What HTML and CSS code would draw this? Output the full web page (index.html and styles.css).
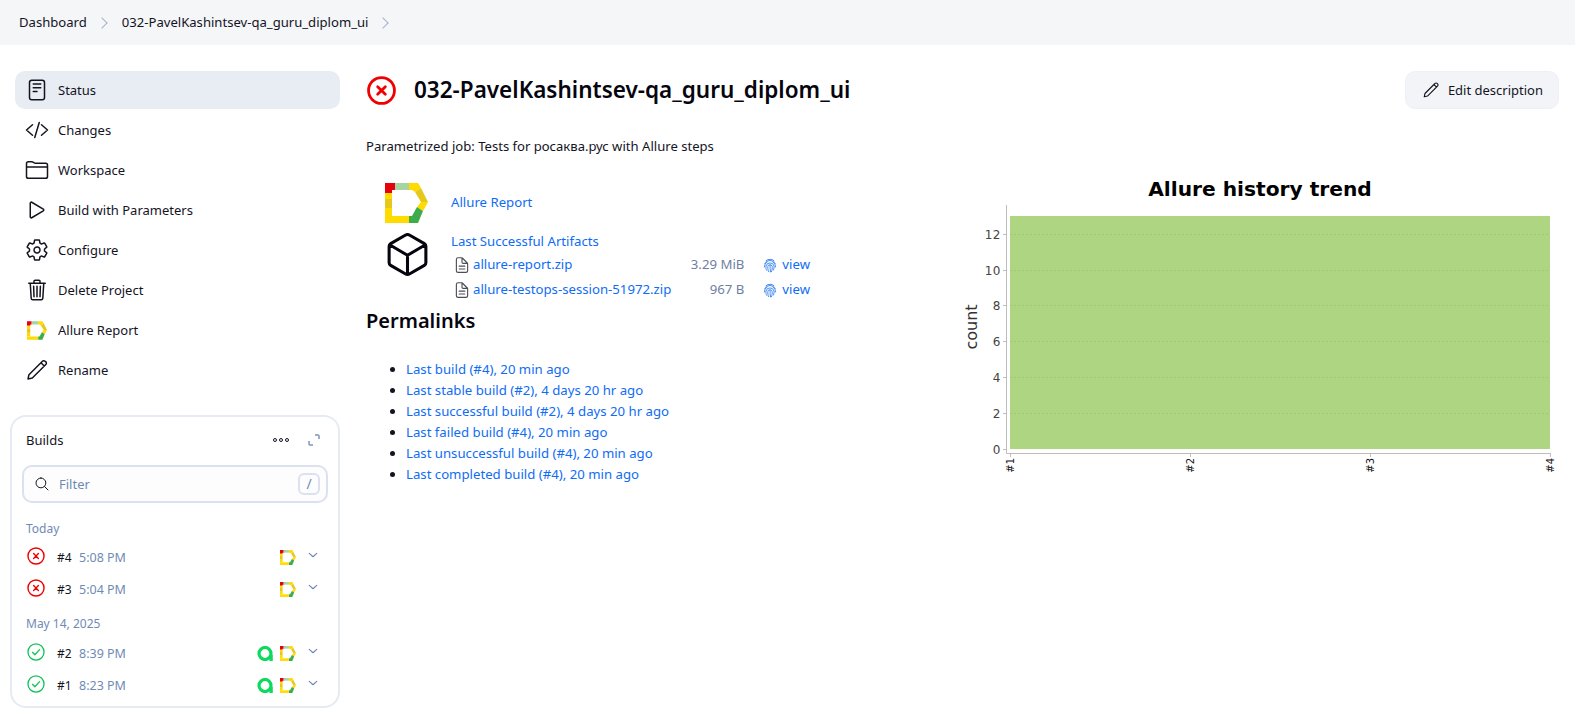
FILE: index.html
```html
<!DOCTYPE html>
<html lang="en">
<head>
  <meta charset="UTF-8">
  <title>032-PavelKashintsev-qa_guru_diplom_ui</title>
  <link rel="stylesheet" href="styles.css">
</head>
<body>

  <!-- Shared icons -->
  <svg class="icon-defs" xmlns="http://www.w3.org/2000/svg">
    <symbol id="i-doc" viewBox="0 0 512 512"><rect x="96" y="48" width="320" height="416" rx="48" class="ln"/><path d="M176 128h160M176 208h160M176 288h80" class="ln"/></symbol>
    <symbol id="i-code" viewBox="0 0 512 512"><path d="M160 368L32 256l128-112M352 368l128-112-128-112M304 96l-96 320" class="ln"/></symbol>
    <symbol id="i-folder" viewBox="0 0 512 512"><path d="M440 432H72a40 40 0 01-40-40V120a40 40 0 0140-40h75.89a40 40 0 0122.19 6.72l27.84 18.56a40 40 0 0022.19 6.72H440a40 40 0 0140 40v240a40 40 0 01-40 40zM32 192h448" class="ln"/></symbol>
    <symbol id="i-play" viewBox="0 0 512 512"><path d="M112 111v290c0 17.44 17 28.52 31 20.16l247.9-148.37c12.12-7.25 12.12-26.33 0-33.58L143 90.84c-14-8.36-31 2.72-31 20.16z" class="ln"/></symbol>
    <symbol id="i-gear" viewBox="0 0 512 512"><path d="M262.29 192.31a64 64 0 1057.4 57.4 64.13 64.13 0 00-57.4-57.4zM416.39 256a154.34 154.34 0 01-1.53 20.79l45.21 35.46a10.81 10.81 0 012.45 13.75l-42.77 74a10.81 10.81 0 01-13.14 4.59l-44.9-18.08a16.11 16.11 0 00-15.17 1.75A164.48 164.48 0 01325 400.8a15.94 15.94 0 00-8.82 12.14l-6.73 47.89a11.08 11.08 0 01-10.68 9.17h-85.54a11.11 11.11 0 01-10.69-8.87l-6.72-47.82a16.07 16.07 0 00-9-12.22 155.3 155.3 0 01-21.46-12.57 16 16 0 00-15.11-1.71l-44.89 18.07a10.81 10.81 0 01-13.14-4.58l-42.77-74a10.8 10.8 0 012.45-13.75l38.21-30a16.05 16.05 0 006-14.08c-.36-4.17-.58-8.33-.58-12.5s.21-8.27.58-12.35a16 16 0 00-6.07-13.94l-38.19-30A10.81 10.81 0 0149.48 186l42.77-74a10.81 10.81 0 0113.14-4.59l44.9 18.08a16.11 16.11 0 0015.17-1.75A164.48 164.48 0 01187 111.2a15.94 15.94 0 008.82-12.14l6.73-47.89A11.08 11.08 0 01213.23 42h85.54a11.11 11.11 0 0110.69 8.87l6.72 47.82a16.07 16.07 0 009 12.22 155.3 155.3 0 0121.46 12.57 16 16 0 0015.11 1.71l44.89-18.07a10.81 10.81 0 0113.14 4.58l42.77 74a10.8 10.8 0 01-2.45 13.75l-38.21 30a16.05 16.05 0 00-6.05 14.08c.33 4.14.55 8.3.55 12.47z" class="ln"/></symbol>
    <symbol id="i-trash" viewBox="0 0 512 512"><path d="M112 112l20 320c.95 18.49 14.4 32 32 32h184c17.68 0 30.87-13.51 32-32l20-320M80 112h352M192 112V72a23.93 23.93 0 0124-24h80a23.93 23.93 0 0124 24v40M256 176v224M184 176l8 224M328 176l-8 224" class="ln"/></symbol>
    <symbol id="i-pencil" viewBox="0 0 512 512"><path d="M340 100L84 356 64 448l92-20 256-256zM372 68a40 40 0 0157 0l15 15a40 40 0 010 57l-32 32-72-72z" class="ln"/></symbol>
    <symbol id="i-search" viewBox="0 0 512 512"><path d="M221.09 64a157.09 157.09 0 10157.09 157.09A157.1 157.1 0 00221.09 64zM338.29 338.29L448 448" class="ln"/></symbol>
    <symbol id="i-cube" viewBox="0 0 512 512"><path d="M448 341.37V170.61A32 32 0 00432.11 143l-152-88.46a47.94 47.94 0 00-48.24 0L79.89 143A32 32 0 0064 170.61v170.76A32 32 0 0079.89 369l152 88.46a48 48 0 0048.24 0l152-88.46A32 32 0 00448 341.37zM69 154l187 110 187-110M256 464V264" class="ln"/></symbol>
    <symbol id="i-file" viewBox="0 0 512 512"><path d="M416 221.25V416a48 48 0 01-48 48H144a48 48 0 01-48-48V96a48 48 0 0148-48h98.75a32 32 0 0122.62 9.37l141.26 141.26a32 32 0 019.37 22.62zM256 56v120a32 32 0 0032 32h120M176 288h160M176 368h160" class="ln"/></symbol>
    <symbol id="i-print" viewBox="0 0 24 24">
      <path d="M6 5.500a9 9 0 0 1 12 0M4 10a9 9 0 0 1 16 0M3.500 15a9 9 0 0 1 4-7.500M20.500 15a9 9 0 0 0-4-7.500M7 20c-1-2-1.500-4-1-6.500a6.200 6.200 0 0 1 12 0c.3 2 0 4-.7 6M10 22c-1-2-1.600-5-1.200-8a3.300 3.300 0 0 1 6.400 0c.4 3 0 5.500-1 8M12 12.500c0 3 .3 6.500 .8 10" class="fp"/>
    </symbol>
    <symbol id="i-fail" viewBox="0 0 28 28"><circle cx="14" cy="14" r="12.500" class="st-fail"/><path d="M10.300 10.300l7.400 7.400M17.700 10.300l-7.400 7.400" class="st-fail"/></symbol>
    <symbol id="i-ok" viewBox="0 0 28 28"><circle cx="14" cy="14" r="12.500" fill="none" stroke="#0fc45a" stroke-width="2"/><path d="M8.500 14.500l3.800 3.800 7.200-8" fill="none" stroke="#0fc45a" stroke-width="2" stroke-linecap="round" stroke-linejoin="round"/></symbol>
    <symbol id="i-allure" viewBox="0 0 43 40">
      <path d="M0 0h10v7H7v3H0z" fill="#e8000d"/>
      <path d="M10 0h14v7H10z" fill="#a7d5a2"/>
      <path d="M24 0h9l3 5-6 4-3-2h-3z" fill="#ffdb00"/>
      <path d="M36 5l7 14h-7l-6-10z" fill="#e6c81c"/>
      <path d="M36 19h7l-5 9-6-4z" fill="#ffdb00"/>
      <path d="M32 24l6 4-5 12h-9v-7h3z" fill="#3fab4a"/>
      <path d="M0 33h24v7H0z" fill="#ffdb00"/>
      <path d="M0 10h7v6H0zM0 25h7v8H0z" fill="#ffdb00"/>
      <path d="M0 16h7v9H0z" fill="#e6c81c"/>
    </symbol>
    <symbol id="i-testops" viewBox="0 0 16 15"><circle cx="8" cy="7.500" r="6" fill="none" stroke="#0bdb5c" stroke-width="3.200"/><path d="M12.500 9h3.300v6h-3.300z" fill="#0bdb5c"/></symbol>
    <symbol id="i-chev" viewBox="0 0 12 8"><path d="M1.500 1.500L6 5.500l4.500-4" fill="none" stroke="#6d87b3" stroke-width="1.400" stroke-linecap="round" stroke-linejoin="round"/></symbol>
  </svg>

  <nav class="breadcrumbs">
    <a href="#">Dashboard</a>
    <span class="crumb-sep"></span>
    <a href="#">032-PavelKashintsev-qa_guru_diplom_ui</a>
    <span class="crumb-sep"></span>
  </nav>

  <div class="page">
    <aside class="sidebar">
      <ul class="tasks">
        <li class="task active"><svg class="task-icon"><use href="#i-doc"/></svg>Status</li>
        <li class="task"><svg class="task-icon"><use href="#i-code"/></svg>Changes</li>
        <li class="task"><svg class="task-icon"><use href="#i-folder"/></svg>Workspace</li>
        <li class="task"><svg class="task-icon"><use href="#i-play"/></svg>Build with Parameters</li>
        <li class="task"><svg class="task-icon"><use href="#i-gear"/></svg>Configure</li>
        <li class="task"><svg class="task-icon"><use href="#i-trash"/></svg>Delete Project</li>
        <li class="task"><svg class="task-logo"><use href="#i-allure"/></svg>Allure Report</li>
        <li class="task"><svg class="task-icon"><use href="#i-pencil"/></svg>Rename</li>
      </ul>

      <section class="builds">
        <div class="builds-head">
          <span>Builds</span>
          <span class="dots"><i></i><i></i><i></i></span>
          <svg class="expand" viewBox="0 0 12 12"><path d="M7 1h3a1 1 0 0 1 1 1v3M5 11H2a1 1 0 0 1-1-1V7"/></svg>
        </div>
        <div class="filter">
          <svg class="filter-icon"><use href="#i-search"/></svg>
          <span class="filter-text">Filter</span>
          <kbd class="filter-key">/</kbd>
        </div>

        <div class="build-date first">Today</div>
        <div class="build-row">
          <svg class="build-status"><use href="#i-fail"/></svg>
          <span class="build-num">#4</span><span class="build-time">5:08 PM</span>
          <span class="build-links"><svg class="mini"><use href="#i-allure"/></svg></span>
          <svg class="chev"><use href="#i-chev"/></svg>
        </div>
        <div class="build-row">
          <svg class="build-status"><use href="#i-fail"/></svg>
          <span class="build-num">#3</span><span class="build-time">5:04 PM</span>
          <span class="build-links"><svg class="mini"><use href="#i-allure"/></svg></span>
          <svg class="chev"><use href="#i-chev"/></svg>
        </div>

        <div class="build-date">May 14, 2025</div>
        <div class="build-row">
          <svg class="build-status"><use href="#i-ok"/></svg>
          <span class="build-num">#2</span><span class="build-time">8:39 PM</span>
          <span class="build-links"><svg class="mini"><use href="#i-testops"/></svg><svg class="mini"><use href="#i-allure"/></svg></span>
          <svg class="chev"><use href="#i-chev"/></svg>
        </div>
        <div class="build-row">
          <svg class="build-status"><use href="#i-ok"/></svg>
          <span class="build-num">#1</span><span class="build-time">8:23 PM</span>
          <span class="build-links"><svg class="mini"><use href="#i-testops"/></svg><svg class="mini"><use href="#i-allure"/></svg></span>
          <svg class="chev"><use href="#i-chev"/></svg>
        </div>
      </section>
    </aside>

    <main class="main">
      <header class="job-head">
        <svg class="job-status"><use href="#i-fail"/></svg>
        <h1>032-PavelKashintsev-qa_guru_diplom_ui</h1>
        <button class="edit-btn" type="button"><svg class="edit-icon"><use href="#i-pencil"/></svg>Edit description</button>
      </header>

      <p class="job-desc">Parametrized job: Tests for росаква.рус with Allure steps</p>

      <div class="job-body">
        <div class="job-left">
          <div class="action">
            <svg class="action-allure"><use href="#i-allure"/></svg>
            <a href="#">Allure Report</a>
          </div>

          <div class="artifacts">
            <svg class="action-cube"><use href="#i-cube"/></svg>
            <div class="artifact-list">
              <a href="#" class="artifact-title">Last Successful Artifacts</a>
              <div class="artifact">
                <svg class="file-icon"><use href="#i-file"/></svg>
                <a href="#" class="artifact-name">allure-report.zip</a>
                <span class="artifact-size">3.29 MiB</span>
                <svg class="print-icon"><use href="#i-print"/></svg>
                <a href="#">view</a>
              </div>
              <div class="artifact">
                <svg class="file-icon"><use href="#i-file"/></svg>
                <a href="#" class="artifact-name">allure-testops-session-51972.zip</a>
                <span class="artifact-size">967 B</span>
                <svg class="print-icon"><use href="#i-print"/></svg>
                <a href="#">view</a>
              </div>
            </div>
          </div>

          <h2>Permalinks</h2>
          <ul class="permalinks">
            <li><a href="#">Last build (#4), 20 min ago</a></li>
            <li><a href="#">Last stable build (#2), 4 days 20 hr ago</a></li>
            <li><a href="#">Last successful build (#2), 4 days 20 hr ago</a></li>
            <li><a href="#">Last failed build (#4), 20 min ago</a></li>
            <li><a href="#">Last unsuccessful build (#4), 20 min ago</a></li>
            <li><a href="#">Last completed build (#4), 20 min ago</a></li>
          </ul>
        </div>

        <svg class="trend" viewBox="0 0 600 320" width="600" height="320">
          <text class="trend-title" x="301" y="26" text-anchor="middle">Allure history trend</text>
          <rect class="trend-area" x="51" y="46" width="540" height="233"/>
          <path class="trend-grid" d="M51 64.500H591M51 100.500H591M51 135.500H591M51 171.500H591M51 207.500H591M51 243.500H591"/>
          <path class="trend-axis" d="M47.500 35V283.500H592M44 64.500h4M44 100.500h4M44 135.500h4M44 171.500h4M44 207.500h4M44 243.500h4M44 279.500h4M51.500 283v4M231.500 283v4M411.500 283v4M591.500 283v4"/>
          <g class="trend-y" text-anchor="end">
            <text x="42" y="69">12</text>
            <text x="42" y="105">10</text>
            <text x="42" y="140">8</text>
            <text x="42" y="176">6</text>
            <text x="42" y="212">4</text>
            <text x="42" y="248">2</text>
            <text x="42" y="284">0</text>
          </g>
          <text class="trend-count" transform="translate(18 157) rotate(-90)" text-anchor="middle">count</text>
          <g class="trend-x" text-anchor="end">
            <text transform="translate(54.500 288) rotate(-90)">#1</text>
            <text transform="translate(234.500 288) rotate(-90)">#2</text>
            <text transform="translate(414.500 288) rotate(-90)">#3</text>
            <text transform="translate(594.500 288) rotate(-90)">#4</text>
          </g>
        </svg>
      </div>
    </main>
  </div>

</body>
</html>
```
FILE: styles.css
```css
* {
  box-sizing: border-box;
}

body {
  font-family: "Noto Sans", "Open Sans", Arial, sans-serif;
  font-size: 13px;
  line-height: 21px;
  margin: 0;
  background-color: #fff;
  color: #14141f;
  overflow: hidden;
}

a {
  color: #0f6cf5;
  text-decoration: none;
}

.icon-defs {
  display: none;
}

.ln {
  fill: none;
  stroke: currentColor;
  stroke-width: 32;
  stroke-linecap: round;
  stroke-linejoin: round;
}

.fp {
  fill: none;
  stroke: #2b7bf0;
  stroke-width: 1.3;
  stroke-linecap: round;
}

.st-fail {
  fill: none;
  stroke: #f00000;
  stroke-width: var(--status-stroke, 2.2);
  stroke-linecap: round;
}

/* Top bar */
.breadcrumbs {
  display: flex;
  align-items: center;
  height: 45px;
  padding-left: 19px;
  background-color: #f5f6f8;
  font-size: 13.1px;
}

.breadcrumbs a {
  color: #14141f;
}

.crumb-sep {
  width: 8px;
  height: 8px;
  margin: 0 16px 0 11px;
  border-top: 1.5px solid #a3b3cd;
  border-right: 1.5px solid #a3b3cd;
  transform: rotate(45deg);
}

.page {
  display: flex;
  padding: 26px 16px 0 10px;
}

/* Sidebar */
.sidebar {
  flex: 0 0 330px;
}

.tasks {
  list-style: none;
  margin: 0 0 26px 5px;
  padding: 0;
  display: grid;
  gap: 2px;
}

.task {
  display: flex;
  align-items: center;
  height: 38px;
  padding-left: 10px;
  gap: 9px;
  border-radius: 10px;
}

.task.active {
  background-color: #e8ecf3;
}

.task-icon {
  width: 24px;
  height: 24px;
  flex: none;
}

.task-logo {
  width: 20px;
  height: 19px;
  margin: 0 2px;
  flex: none;
}

.builds {
  height: 293px;
  border: 2px solid #e6ebf3;
  border-radius: 16px;
  padding: 12px 10px 0 10px;
}

.builds-head {
  display: flex;
  align-items: center;
  height: 22px;
  padding-left: 4px;
}

.dots {
  display: flex;
  gap: 2px;
  margin-left: auto;
  margin-right: 19px;
}

.dots i {
  width: 4px;
  height: 4px;
  border: 1px solid #14141f;
  border-radius: 50%;
}

.expand {
  width: 12px;
  height: 12px;
  margin-right: 8px;
  fill: none;
  stroke: #7d95bd;
  stroke-width: 1.5;
}

.filter {
  display: flex;
  align-items: center;
  height: 38px;
  margin-top: 14px;
  padding: 0 6px 0 10px;
  border: 2px solid #dbe1ee;
  border-radius: 10px;
  background-color: #fdfdfe;
}

.filter-icon {
  width: 16px;
  height: 16px;
}

.filter-text {
  margin-left: 9px;
  color: #6f8ab5;
}

.filter-key {
  width: 22px;
  height: 22px;
  margin-left: auto;
  border: 2px solid #dbe1ee;
  border-radius: 6px;
  color: #6f8ab5;
  font: inherit;
  font-size: 14px;
  line-height: 17px;
  text-align: center;
}

.build-date {
  margin-top: 9px;
  padding: 0 0 3px 4px;
  font-size: 12px;
  line-height: 20px;
  color: #6f8ab5;
}

.build-date.first {
  margin-top: 16px;
  padding-bottom: 2px;
}

.build-row {
  display: flex;
  align-items: center;
  height: 32px;
  padding-left: 5px;
  font-size: 12px;
}

.build-status {
  width: 18px;
  height: 18px;
  margin: -2px 12px 0 0;
}

.build-num {
  width: 22px;
}

.build-time {
  color: #6f8ab5;
  font-size: 12.5px;
}

.build-links {
  display: flex;
  align-items: center;
  gap: 7px;
  margin-left: auto;
  margin-right: 12px;
}

.mini {
  width: 16px;
  height: 15px;
}

.chev {
  width: 10px;
  height: 7px;
  margin: -4px 10px 0 0;
}

/* Main column */
.main {
  flex: 1;
  margin-left: 26px;
  font-size: 13.2px;
}

.job-head {
  display: flex;
  align-items: center;
  height: 38px;
}

.job-status {
  --status-stroke: 2.7;
  width: 29px;
  height: 29px;
  margin: 0 18px 0 1px;
}

h1 {
  margin: 0;
  font-size: 22.5px;
  font-weight: 600;
  line-height: 38px;
  color: #05050f;
}

.edit-btn {
  display: flex;
  align-items: center;
  gap: 8px;
  height: 38px;
  margin-left: auto;
  padding: 0 15px 0 16px;
  border: 1px solid #edf0f6;
  border-radius: 10px;
  background-color: #f2f4f8;
  color: #14141f;
  font: inherit;
  font-size: 13px;
}

.edit-icon {
  width: 18px;
  height: 18px;
}

.job-desc {
  margin: 27px 0 0;
  font-size: 13.1px;
}

.job-body {
  display: flex;
  justify-content: space-between;
}

.job-left {
  flex: 1;
  padding-top: 25px;
}

.action {
  display: flex;
  align-items: center;
  height: 41px;
  padding-left: 19px;
}

.action-allure {
  width: 43px;
  height: 40px;
  margin-right: 23px;
}

.artifacts {
  display: flex;
  padding: 8px 0 0 19px;
}

.action-cube {
  width: 49px;
  height: 49px;
  margin: -1px 19px 0 -2px;
  color: #05050f;
}

.artifact-list {
  width: 359px;
}

.artifact-title {
  display: block;
  height: 21px;
  line-height: 20px;
}

.artifact {
  display: flex;
  align-items: center;
  height: 25px;
  padding-left: 2px;
}

.file-icon {
  width: 18px;
  height: 18px;
  margin-right: 2px;
  color: #4d4d55;
}

.artifact-name {
  flex: 1;
}

.artifact-size {
  color: #6f7fa3;
  margin-right: 18px;
}

.print-icon {
  width: 16px;
  height: 16px;
  margin-right: 4px;
}

h2 {
  margin: 5px 0 0;
  font-size: 20px;
  font-weight: 600;
  line-height: 28px;
  color: #05050f;
}

.permalinks {
  margin: 24px 0 0;
  padding-left: 40px;
}

/* Trend chart */
.trend {
  flex: none;
  margin-top: 13px;
  font-family: "DejaVu Sans", sans-serif;
}

.trend-title {
  font-size: 20.2px;
  font-weight: 700;
  fill: #000;
}

.trend-area {
  fill: #aed581;
}

.trend-grid {
  fill: none;
  stroke: #9dc876;
  stroke-dasharray: 2 2;
}

.trend-axis {
  fill: none;
  stroke: #bdbdbd;
}

.trend-y text {
  font-size: 12px;
  letter-spacing: 0.5px;
  fill: #444;
}

.trend-count {
  font-size: 16px;
  fill: #333;
}

.trend-x text {
  font-size: 10px;
  fill: #111;
}
```
